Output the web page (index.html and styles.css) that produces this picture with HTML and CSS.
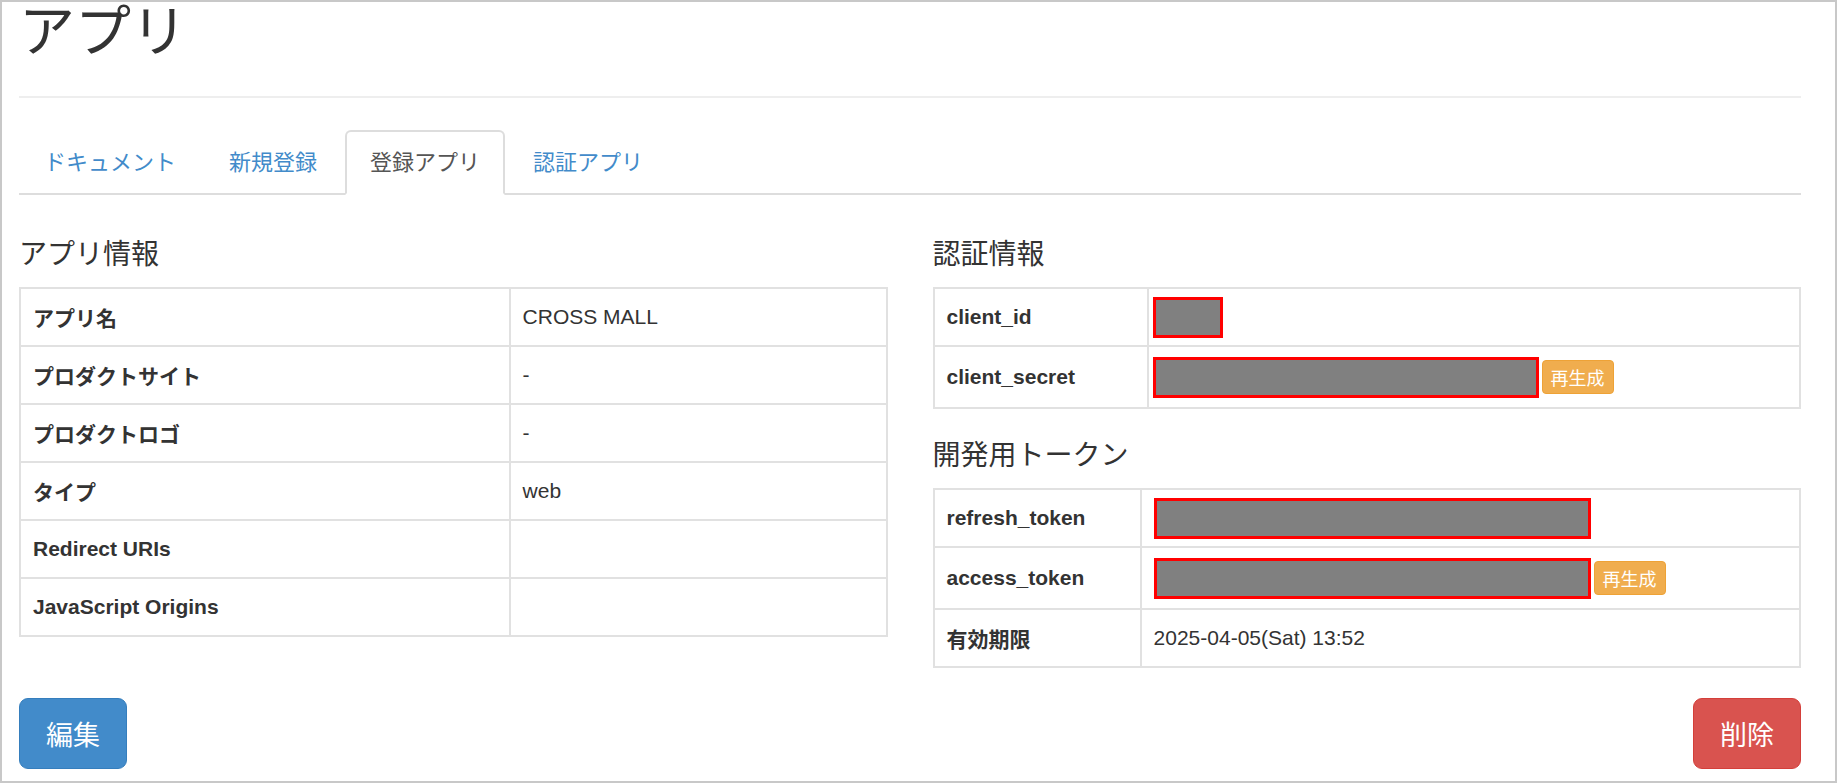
FILE: index.html
```html
<!DOCTYPE html>
<html lang="ja">
<head>
    <meta charset="UTF-8">
    <title>アプリ</title>
    <link rel="stylesheet" href="styles.css">
</head>
<body>
    <div class="page">
        <div class="page-header">
            <h1>アプリ</h1>
        </div>

        <ul class="nav-tabs">
            <li><a href="#">ドキュメント</a></li>
            <li><a href="#">新規登録</a></li>
            <li class="active"><a href="#">登録アプリ</a></li>
            <li><a href="#">認証アプリ</a></li>
        </ul>

        <div class="row">
            <div class="col">
                <h4>アプリ情報</h4>
                <table class="table app-table">
                    <tr><th>アプリ名</th><td>CROSS MALL</td></tr>
                    <tr><th>プロダクトサイト</th><td>-</td></tr>
                    <tr><th>プロダクトロゴ</th><td>-</td></tr>
                    <tr><th>タイプ</th><td>web</td></tr>
                    <tr><th>Redirect URIs</th><td></td></tr>
                    <tr><th>JavaScript Origins</th><td></td></tr>
                </table>
            </div>

            <div class="col">
                <h4>認証情報</h4>
                <table class="table client-table">
                    <tr>
                        <th>client_id</th>
                        <td class="secret-cell"><span class="redact redact-id"></span></td>
                    </tr>
                    <tr class="has-btn">
                        <th>client_secret</th>
                        <td class="secret-cell"><span class="redact redact-secret"></span><button class="btn-regen">再生成</button></td>
                    </tr>
                </table>

                <h4>開発用トークン</h4>
                <table class="table token-table">
                    <tr>
                        <th>refresh_token</th>
                        <td><span class="redact redact-token"></span></td>
                    </tr>
                    <tr class="has-btn">
                        <th>access_token</th>
                        <td><span class="redact redact-token"></span><button class="btn-regen">再生成</button></td>
                    </tr>
                    <tr>
                        <th>有効期限</th>
                        <td>2025-04-05(Sat) 13:52</td>
                    </tr>
                </table>
            </div>
        </div>

        <div class="actions">
            <button class="btn btn-primary">編集</button>
            <button class="btn btn-danger">削除</button>
        </div>
    </div>
</body>
</html>
```

FILE: styles.css
```css
html, body {
    margin: 0;
    padding: 0;
}
body {
    font-family: "Liberation Sans", "Noto Sans CJK JP", sans-serif;
    font-size: 21px;
    color: #333;
    background: #fff;
}
.page {
    box-sizing: border-box;
    width: 1837px;
    height: 783px;
    border: 2px solid #c8c8c8;
    padding: 0 34px 0 17px;
    overflow: hidden;
}
.page-header {
    border-bottom: 2px solid #eee;
    padding-bottom: 34px;
}
h1 {
    margin: 0;
    font-size: 56px;
    font-weight: 400;
    line-height: 60px;
    color: #333;
}
.nav-tabs {
    display: flex;
    list-style: none;
    margin: 32px 0 0;
    padding: 0;
    border-bottom: 2px solid #ddd;
}
.nav-tabs li {
    margin-right: 3px;
    margin-bottom: -2px;
}
.nav-tabs a {
    display: block;
    padding: 0 23px;
    height: 61px;
    line-height: 61px;
    font-size: 22px;
    color: #428bca;
    text-decoration: none;
    border: 2px solid transparent;
    border-radius: 6px 6px 0 0;
}
.nav-tabs .active a {
    color: #555;
    background: #fff;
    border-color: #ddd #ddd transparent;
}
.row {
    display: flex;
    gap: 45px;
    align-items: flex-start;
    margin-top: 43px;
}
.col {
    flex: 1;
}
h4 {
    margin: 0 0 16px;
    font-size: 28px;
    font-weight: 400;
    line-height: 33px;
}
.table {
    width: 100%;
    border-collapse: collapse;
    margin-bottom: 30px;
}
.table th,
.table td {
    height: 56px;
    padding: 0 12px;
    border: 2px solid #e1e1e1;
    text-align: left;
    vertical-align: middle;
    white-space: nowrap;
}
.table th {
    font-weight: 700;
}
.table .has-btn th,
.table .has-btn td {
    height: 60px;
}
.app-table th {
    width: 56.5%;
}
.client-table th {
    width: 24.7%;
}
.token-table th {
    width: 23.9%;
}
.secret-cell {
    padding-left: 4px !important;
}
.redact {
    display: inline-block;
    box-sizing: border-box;
    height: 41px;
    vertical-align: middle;
    background: #808080;
    border: 3px solid #f00;
}
.redact-id {
    width: 70px;
}
.redact-secret {
    width: 386px;
}
.redact-token {
    width: 437px;
}
.btn-regen {
    vertical-align: middle;
    margin-left: 3px;
    height: 34px;
    padding: 0 8px;
    font-family: inherit;
    font-size: 18px;
    color: #fff;
    background: #f0ad4e;
    border: 1px solid #eea236;
    border-radius: 4px;
}
.actions {
    display: flex;
    justify-content: space-between;
    margin-top: 0;
}
.btn {
    height: 71px;
    padding: 0 26px;
    font-family: inherit;
    font-size: 27px;
    color: #fff;
    border-radius: 9px;
    border: 1px solid transparent;
}
.btn-primary {
    background: #428bca;
    border-color: #357ebd;
}
.btn-danger {
    background: #d9534f;
    border-color: #d43f3a;
}
```
